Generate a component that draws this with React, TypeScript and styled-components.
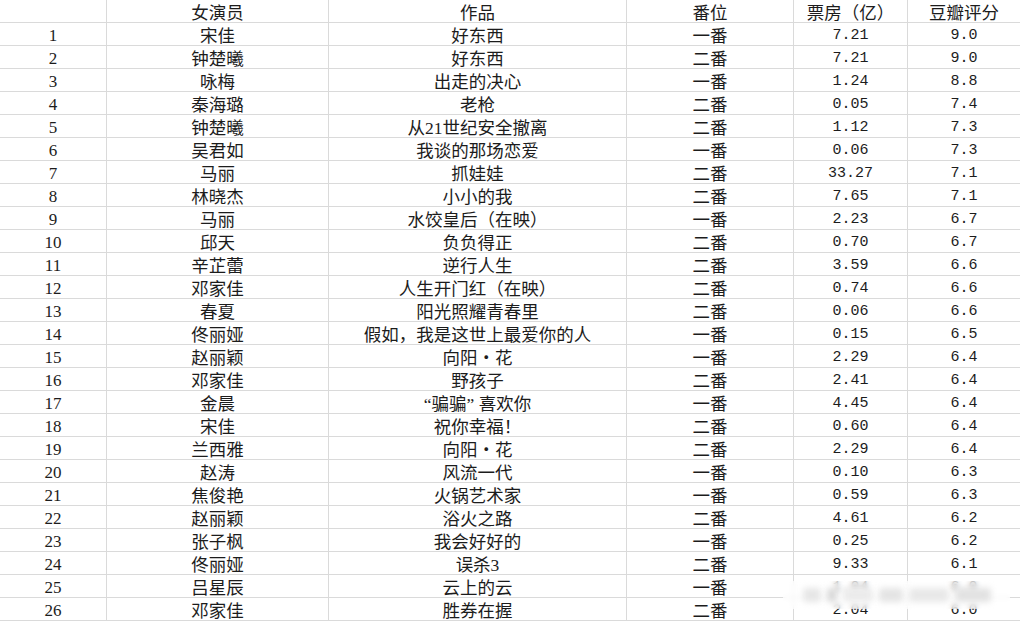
import React from "react";
import styled, { createGlobalStyle } from "styled-components";

type Row = [string, string, string, string, string];

const rows: Row[] = [
  ["宋佳", "好东西", "一番", "7.21", "9.0"],
  ["钟楚曦", "好东西", "二番", "7.21", "9.0"],
  ["咏梅", "出走的决心", "一番", "1.24", "8.8"],
  ["秦海璐", "老枪", "二番", "0.05", "7.4"],
  ["钟楚曦", "从21世纪安全撤离", "二番", "1.12", "7.3"],
  ["吴君如", "我谈的那场恋爱", "一番", "0.06", "7.3"],
  ["马丽", "抓娃娃", "二番", "33.27", "7.1"],
  ["林晓杰", "小小的我", "二番", "7.65", "7.1"],
  ["马丽", "水饺皇后（在映）", "一番", "2.23", "6.7"],
  ["邱天", "负负得正", "二番", "0.70", "6.7"],
  ["辛芷蕾", "逆行人生", "二番", "3.59", "6.6"],
  ["邓家佳", "人生开门红（在映）", "二番", "0.74", "6.6"],
  ["春夏", "阳光照耀青春里", "二番", "0.06", "6.6"],
  ["佟丽娅", "假如，我是这世上最爱你的人", "一番", "0.15", "6.5"],
  ["赵丽颖", "向阳・花", "一番", "2.29", "6.4"],
  ["邓家佳", "野孩子", "二番", "2.41", "6.4"],
  ["金晨", "“骗骗” 喜欢你", "一番", "4.45", "6.4"],
  ["宋佳", "祝你幸福！", "二番", "0.60", "6.4"],
  ["兰西雅", "向阳・花", "二番", "2.29", "6.4"],
  ["赵涛", "风流一代", "一番", "0.10", "6.3"],
  ["焦俊艳", "火锅艺术家", "一番", "0.59", "6.3"],
  ["赵丽颖", "浴火之路", "二番", "4.61", "6.2"],
  ["张子枫", "我会好好的", "一番", "0.25", "6.2"],
  ["佟丽娅", "误杀3", "二番", "9.33", "6.1"],
  ["吕星辰", "云上的云", "一番", "1.04", "6.0"],
  ["邓家佳", "胜券在握", "二番", "2.04", "6.0"],
];

const GlobalStyle = createGlobalStyle`
  html, body {
    margin: 0;
    padding: 0;
    background: #ffffff;
    overflow: hidden;
  }
`;

const Sheet = styled.div`
  position: relative;
  width: 1020px;
  height: 621px;
  overflow: hidden;
  background: #ffffff;
`;

const Grid = styled.div`
  display: grid;
  grid-template-columns: 107px 222px 298px 167px 114px 112px;
  grid-auto-rows: 23px;
`;

const Cell = styled.div<{ $num?: boolean; $index?: boolean; $last?: boolean }>`
  box-sizing: border-box;
  border-bottom: 1px solid #dadada;
  border-right: ${({ $last }) => ($last ? "none" : "1px solid #dadada")};
  display: flex;
  justify-content: center;
  padding-top: 4px;
  line-height: 18px;
  white-space: nowrap;
  color: #1c1c1c;
  font-family: ${({ $num }) =>
    $num
      ? '"Liberation Mono", "Noto Sans CJK SC", monospace'
      : '"Liberation Serif", "Noto Sans CJK SC", serif'};
  font-size: ${({ $num, $index }) => ($num ? "15px" : $index ? "17px" : "17.5px")};
`;

/* blurred watermark band over the last rows */
const Watermark = styled.div`
  position: absolute;
  left: 783px;
  top: 581px;
  width: 227px;
  height: 28px;
  background: rgba(255, 255, 255, 0.6);
  backdrop-filter: blur(2.5px);
  display: flex;
  align-items: center;
  gap: 6px;
  padding-left: 20px;
  box-sizing: border-box;
`;

const Smudge = styled.span<{ $w: number; $tone: string }>`
  display: block;
  width: ${({ $w }) => $w}px;
  height: 14px;
  background: ${({ $tone }) => $tone};
  filter: blur(3px);
  border-radius: 3px;
`;

const headers = ["", "女演员", "作品", "番位", "票房（亿）", "豆瓣评分"];

const smudges: [number, string][] = [
  [18, "#e6e6e6"],
  [10, "#d8d8d8"],
  [30, "#ebebeb"],
  [24, "#e4e4e4"],
  [40, "#e8e8e8"],
  [36, "#e2e2e2"],
];

export default function App() {
  return (
    <>
      <GlobalStyle />
      <Sheet>
        <Grid>
          {headers.map((h, i) => (
            <Cell key={`h${i}`} $last={i === 5}>
              {h}
            </Cell>
          ))}
          {rows.map((r, i) => (
            <React.Fragment key={i}>
              <Cell $index>{i + 1}</Cell>
              <Cell>{r[0]}</Cell>
              <Cell>{r[1]}</Cell>
              <Cell>{r[2]}</Cell>
              <Cell $num>{r[3]}</Cell>
              <Cell $num $last>
                {r[4]}
              </Cell>
            </React.Fragment>
          ))}
        </Grid>
        <Watermark>
          {smudges.map(([w, tone], i) => (
            <Smudge key={i} $w={w} $tone={tone} />
          ))}
        </Watermark>
      </Sheet>
    </>
  );
}
